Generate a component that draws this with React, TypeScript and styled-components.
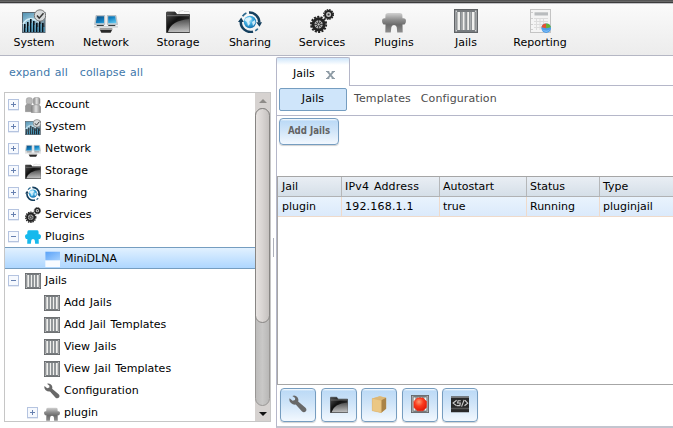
import React from 'react';
import styled, { createGlobalStyle, css } from 'styled-components';

const GlobalStyle = createGlobalStyle`
  * { box-sizing: border-box; }
  body {
    margin: 0;
    overflow: hidden;
    background: #fff;
    color: #000;
    font: 11px/14px "DejaVu Sans", Verdana, sans-serif;
    word-spacing: 1px;
  }
  svg { display: block; flex: none; }
`;

/* ---------- icons ---------- */

type IconName =
  | 'account' | 'system' | 'network' | 'storage' | 'sharing' | 'services'
  | 'plugin' | 'pluginBlue' | 'jail' | 'report' | 'wrench' | 'app' | 'box' | 'stop' | 'shell' | 'folder';

const DefsSvg = styled.svg`
  position: absolute;
`;

const Defs = () => (
  <DefsSvg width="0" height="0">
    <defs>
      <linearGradient id="gSky" x1="0" y1="0" x2="0.6" y2="1">
        <stop offset="0" stopColor="#4e8fb0" /><stop offset="0.5" stopColor="#9cc8dc" /><stop offset="1" stopColor="#4a5c68" />
      </linearGradient>
      <linearGradient id="gScreen" x1="0" y1="0" x2="1" y2="1">
        <stop offset="0" stopColor="#0a4a80" /><stop offset="0.5" stopColor="#1283c4" /><stop offset="1" stopColor="#6cd0f4" />
      </linearGradient>
      <linearGradient id="gFolder" x1="0" y1="0" x2="0" y2="1">
        <stop offset="0" stopColor="#5c5c5c" /><stop offset="1" stopColor="#f0f0f0" />
      </linearGradient>
      <linearGradient id="gDark" x1="0" y1="0" x2="1" y2="1">
        <stop offset="0" stopColor="#555" /><stop offset="0.4" stopColor="#111" /><stop offset="1" stopColor="#444" />
      </linearGradient>
      <linearGradient id="gPlug" x1="0" y1="0" x2="0" y2="1">
        <stop offset="0" stopColor="#d2d2d2" /><stop offset="0.35" stopColor="#8e8e8e" /><stop offset="0.6" stopColor="#6c6c6c" /><stop offset="1" stopColor="#8e8e8e" />
      </linearGradient>
      <linearGradient id="gPerson" x1="0" y1="0" x2="1" y2="0">
        <stop offset="0" stopColor="#808080" /><stop offset="0.5" stopColor="#e0e0e0" /><stop offset="1" stopColor="#858585" />
      </linearGradient>
      <linearGradient id="gApp" x1="0" y1="0" x2="1" y2="1">
        <stop offset="0" stopColor="#5aa2f7" /><stop offset="1" stopColor="#a4d0ff" />
      </linearGradient>
      <radialGradient id="gGlobe" cx="0.4" cy="0.35" r="0.7">
        <stop offset="0" stopColor="#c8efff" /><stop offset="0.5" stopColor="#3aa9df" /><stop offset="1" stopColor="#0e6aa8" />
      </radialGradient>
      <radialGradient id="gRed" cx="0.4" cy="0.3" r="0.7">
        <stop offset="0" stopColor="#ff9a70" /><stop offset="0.5" stopColor="#fb3a1c" /><stop offset="1" stopColor="#e01c08" />
      </radialGradient>
    </defs>
  </DefsSvg>
);

const PLUG =
  'M3.5 5.5Q4 4 6 4H18Q20 4 20.3 5.5L20.5 9.3H22Q24 9.5 24 11.8T22.5 15.5H20.5L20.7 23.5H15.2L14.8 18.5Q14.5 16 12 16T9.3 18.5L8.8 23.5H3.3L3.5 15.5H1.5Q0 14 0 11.8T2 9.3H3.3Z';

const SMALL_PLUG =
  'M3.5 4Q4 2 6 2H18Q20 2 20.3 4L20.5 8H22Q24 8.5 24 11T22.5 15H20.5L20.7 22H15.2L14.8 17.5Q14.5 15 12 15T9.3 17.5L8.8 22H3.3L3.5 15H1.5Q0 13.5 0 11T2 8H3.3Z';

const bars = [2, 5, 8, 11, 14, 17, 20];
const barTops = [15, 13, 10, 12, 14, 11, 14];

const Bars = () => (
  <>
    <rect width="24" height="24" fill="#606366" />
    <rect x="1" y="1" width="22" height="22" fill="#85888b" />
    <rect x="3.5" y="3" width="17" height="18" fill="#f0f0ee" />
    {[6, 10.6, 15.2].map((x) => (
      <g key={x}>
        <rect x={x} y="2" width="2.6" height="20" fill="#777c7f" />
        <rect x={x + 0.7} y="2" width="1.1" height="20" fill="#a7abad" />
      </g>
    ))}
    <path d="M2 2h20M2 22h20" stroke="#777b7e" strokeWidth="2" />
    <path d="M1.8 1.8v20.4M22.2 1.8v20.4" stroke="#aaadaf" strokeWidth="1" />
    <path d="M2 2.2h1M21 2.2h1M2 21.8h1M21 21.8h1" stroke="#eee" />
  </>
);

const Folder = () => (
  <>
    <path d="M0.5 23.5V3.5Q0.5 3 1 3H9l2 2.5H23.5V23.5Z" fill="url(#gDark)" stroke="#333" strokeWidth="0.8" />
    <path d="M2 23Q5 11.5 23.5 10V23Z" fill="url(#gFolder)" opacity="0.75" />
    <path d="M1 6.7H23" stroke="#888" strokeWidth="0.8" />
  </>
);

const shapes: Record<IconName, React.ReactNode> = {
  account: (
    <g stroke="#888" strokeWidth="0.7">
      <rect x="2" y="1" width="9" height="10" rx="3" fill="#bbb" />
      <path d="M0.5 22V14Q1 10 6 10.5T12 14V22Z" fill="#999" />
      <rect x="12.5" y="0.7" width="10" height="11" rx="3" fill="url(#gPerson)" />
      <path d="M9.5 23.5V15Q10 11.5 16.5 11.5T23.5 15V23.5Z" fill="url(#gPerson)" />
    </g>
  ),
  system: (
    <>
      <rect x="0.5" y="3.5" width="22.5" height="20" fill="url(#gSky)" stroke="#596670" />
      <path d="M1 15Q7 5 18 14" fill="none" stroke="#d5edf5" strokeWidth="1.5" />
      {bars.map((x, i) => (
        <g key={x}>
          <rect x={x} y={barTops[i]} width="1.6" height={23 - barTops[i]} fill="#08131b" />
          <rect x={x + 1.6} y={barTops[i] + 4} width="0.9" height={19 - barTops[i]} fill="#4eb4df" />
        </g>
      ))}
      <circle cx="18" cy="6.5" r="5.7" fill="#d7dadb" stroke="#777" />
      <path d="M15 6.5l2.2 2.7 4.3-5" fill="none" stroke="#353535" strokeWidth="1.5" />
    </>
  ),
  network: (
    <>
      <path d="M2 6.5h8.8v9H0.6zM13.3 6.5h8.7l1.5 9h-10.2z" fill="#c9d0d4" stroke="#a0a8ae" strokeWidth="0.6" />
      <path d="M2.8 7.3h7.2v7H1.8zM14.2 7.3h7l1.2 7h-8.2z" fill="url(#gScreen)" />
      <path d="M3 16h6.5l.6 1H2.4zM14.5 16h6.5l.6 1h-7.6z" fill="#353c40" />
      <path d="M0 17.9h24" stroke="#b8bdc0" strokeWidth="1" />
      <rect x="5.5" y="19" width="13" height="2.2" rx="0.8" fill="#a0a0a0" />
      <path d="M6 21h12l-1.3 2.8H7.3z" fill="#292929" />
    </>
  ),
  storage: (
    <>
      <path d="M13 6V2.5l4-1 1 1h5l1 1V12H13z" fill="#fafafa" stroke="#cfcfcf" strokeWidth="0.7" />
      <Folder />
    </>
  ),
  folder: <Folder />,
  sharing: (
    <>
      <circle cx="12" cy="13" r="6.2" fill="url(#gGlobe)" />
      <path d="M8 9l4-1 2 2-3 2 1 3-2 2-1-4-3-2zM14 13l3-2 .5 3-2.5 3z" fill="#e5f8ff" opacity="0.85" />
      <g fill="none" stroke="#143f5e" strokeWidth="2.5">
        <path d="M11 3.6A9.8 9.8 0 0 1 21.3 13.5" />
        <path d="M15 22.6A9.8 9.8 0 0 1 2.8 12.5" />
      </g>
      <path d="M18.2 13.3H24l-2.5 4.4zM0 12.9h5.8L3.2 8.5z" fill="#143f5e" />
      <path d="M4.6 7.2Q6 5 8.4 4" stroke="#2a678d" strokeWidth="1.8" fill="none" />
      <path d="M19.8 19.6Q18.8 21 17.2 21.8" stroke="#2a678d" strokeWidth="1.6" fill="none" />
    </>
  ),
  services: (
    <>
      <circle cx="8.6" cy="15.4" r="7.6" fill="none" stroke="#222" strokeWidth="1.9" strokeDasharray="2.1 1.32" />
      <circle cx="8.6" cy="15.4" r="5.6" fill="#b5b5b5" stroke="#222" strokeWidth="2.9" />
      <path d="M8.6 11v9M4 15.4h9M5.4 12.2l6.4 6.4M11.8 12.2l-6.4 6.4" stroke="#333" strokeWidth="0.9" />
      <circle cx="8.6" cy="15.4" r="1.6" fill="#bbb" stroke="#222" strokeWidth="0.8" />
      <circle cx="18.6" cy="5.5" r="4.8" fill="none" stroke="#222" strokeWidth="1.3" strokeDasharray="1.6 0.91" />
      <circle cx="18.6" cy="5.5" r="3.5" fill="#c5c5c5" stroke="#222" strokeWidth="2" />
      <circle cx="18.6" cy="5.5" r="1.1" fill="#333" />
    </>
  ),
  plugin: <path d={PLUG} fill="url(#gPlug)" />,
  pluginBlue: <path d={SMALL_PLUG} fill="#16b9ed" />,
  jail: <Bars />,
  report: (
    <>
      <rect x="2.5" y="0.5" width="20" height="23" fill="#f4f4f4" stroke="#c4c4c4" />
      <rect x="6.5" y="3.3" width="13.5" height="3.2" fill="#b9bcbe" />
      <path d="M6 9.5h14M6 12.5h14M6 15.5h14M6 18.5h14M8.5 9v12M12 9v12M15.5 9v12" stroke="#dcdcdc" />
      <path d="M4 3v1M4 9v1M4 15v1M4 20v1" stroke="#aaa" />
      <circle cx="18.2" cy="19.2" r="4.8" fill="#4c9ce8" />
      <path d="M18.2 19.2L13.4 18.2Q14.2 14.4 18.2 14.4z" fill="#e65032" />
      <path d="M18.2 19.2V14.4Q22.2 14.4 22.9 18.2z" fill="#65b32e" />
      <path d="M14.2 20.2q4 3 8 0-4 5-8 0z" fill="#94cbff" />
    </>
  ),
  wrench: (
    <path
      d="M4.5 1.2Q8.5-.3 11.2 3 13.2 6 12.2 8.6L22 17Q24.2 19.2 22.5 21.8 20 24 17.4 22L9 12.8Q5.6 13.4 2.6 10.8-.4 8 .8 4.4L4.8 7.8 8 6.8 8.2 4Z"
      fill="#686868"
    />
  ),
  app: (
    <>
      <rect x="2" y="1" width="22" height="23" fill="#f8fbff" />
      <rect x="2" y="1" width="22" height="13" fill="url(#gApp)" />
    </>
  ),
  box: (
    <>
      <path d="M3 4.5L13 1.5l8.5 2.2v14.6L15 23.5 3 21Z" fill="#e8bf79" />
      <path d="M3 4.5L13 1.5l8.5 2.2-6.5 3.4z" fill="#dcb878" />
      <path d="M15 7.1l6.5-3.4v14.6L15 23.5z" fill="#a98347" />
      <path d="M3 4.5l12 2.6V23.5L3 21z" fill="#ebc784" stroke="#d4aa67" strokeWidth="0.5" />
    </>
  ),
  stop: (
    <>
      <Bars />
      <path d="M8.5 4h7.5l4.5 4.5v8L16 21H8.5L4 16.5v-8z" fill="url(#gRed)" stroke="#ec321b" />
    </>
  ),
  shell: (
    <>
      <rect y="2" width="24" height="21" fill="#292929" />
      <path d="M0 3h24" stroke="#777" strokeWidth="2" />
      <rect y="17" width="24" height="2" fill="#555" />
      <g fill="none" stroke="#ccc" strokeWidth="1.5">
        <path d="M7.5 7L2.8 10.8l4.7 3.6M13 7.6H9.5L8.8 10.6h3.6l-.6 3.6H8M17.5 6.5l-3.4 9M18.5 7l3.8 3.8-4.3 3.6" />
      </g>
    </>
  ),
};

const Icon = ({ name, size }: { name: IconName; size: number }) => (
  <svg width={size} height={size} viewBox="0 0 24 24">{shapes[name]}</svg>
);

/* ---------- page ---------- */

const Page = styled.div`
  width: 673px;
  height: 428px;
  display: flex;
  flex-direction: column;
  overflow: hidden;
`;

const TopEdge = styled.div`
  height: 4px;
  flex: none;
  background: linear-gradient(#555 0 1px, #686868 1px 2px, #3c3c3c 2px 3px, #c2c2c6 3px);
`;

const Toolbar = styled.nav`
  height: 52px;
  flex: none;
  display: flex;
  border-bottom: 1px solid #b5b7c4;
  background: linear-gradient(#fafafa, #ececec);
`;

const ToolItem = styled.div<{ $w?: number }>`
  width: ${(p) => p.$w ?? 72}px;
  padding-top: 5px;
  display: flex;
  flex-direction: column;
  align-items: center;
  gap: 3px;
  &:first-child { margin-left: -2px; }
`;

const Main = styled.div`
  flex: 1;
  min-height: 0;
  display: flex;
`;

const Sidebar = styled.aside`
  width: 271px;
  padding: 10px 0 6px 4px;
  display: flex;
  flex-direction: column;
`;

const TreeLinks = styled.div`
  display: flex;
  gap: 12px;
  padding: 0 0 12px 5px;
  color: #4178ab;
  letter-spacing: 0.07px;
`;

const TreeBox = styled.div`
  flex: 1;
  min-height: 0;
  display: flex;
  border: 1px solid #c6c6c6;
`;

const TreeList = styled.div`
  flex: 1;
  overflow: hidden;
`;

const TreeRow = styled.div<{ $nested?: boolean; $selected?: boolean }>`
  height: 22px;
  padding-left: ${(p) => (p.$nested ? 22 : 3)}px;
  display: flex;
  align-items: center;
  white-space: nowrap;
  ${(p) =>
    p.$selected &&
    css`
      background: linear-gradient(#e4f2ff, #abd5ff);
      box-shadow: inset 0 1px #759dc0, inset 0 -1px #759dc0;
    `}
`;

const Toggle = styled.span<{ $kind?: 'open' | 'closed' }>`
  width: 11px;
  height: 11px;
  flex: none;
  margin-right: 6px;
  ${(p) =>
    p.$kind &&
    css`
      border: 1px solid #b5c4e0;
      box-shadow: 0 1px #e6ebf4;
      background:
        linear-gradient(#6680b0, #6680b0) center / 5px 1px no-repeat,
        linear-gradient(#6680b0, #6680b0) center / ${p.$kind === 'closed' ? '1px 5px' : '0 0'} no-repeat,
        #f6f9fe;
    `}
`;

const RowIcon = styled.span`
  margin: 2px 4px 0 0;
`;

const RowLabel = styled.span`
  padding-top: 2px;
`;

const ScrollBar = styled.div`
  width: 15px;
  display: flex;
  flex-direction: column;
  background: #d6d2d0;
`;

const Arrow = styled.span<{ $down?: boolean }>`
  height: 15px;
  flex: none;
  display: flex;
  align-items: center;
  justify-content: center;
  color: ${(p) => (p.$down ? '#111' : '#8e8b88')};
  &::before {
    content: '';
    border: solid transparent;
    border-width: ${(p) => (p.$down ? '4px 4px 0' : '0 4px 4px')};
    ${(p) => (p.$down ? 'border-top-color' : 'border-bottom-color')}: currentColor;
  }
`;

const Track = styled.div`
  flex: 1;
  border: 1px solid #999795;
  border-radius: 8px;
  background: linear-gradient(90deg, #bdbcbb, #c9c8c7 50%, #b9b8b7);
`;

const Thumb = styled.div`
  height: 215px;
  margin: -1px;
  border: 1px solid #878583;
  border-radius: 8px;
  background: linear-gradient(90deg, #e7e3e1, #d8d4d2 50%, #c5c1bf);
`;

const Splitter = styled.div`
  width: 5px;
  padding: 182px 0 0 2px;
  &::before {
    content: '';
    display: block;
    width: 1px;
    height: 19px;
    background: #adb0ba;
  }
`;

const Content = styled.main`
  flex: 1;
  min-width: 0;
  display: flex;
  flex-direction: column;
  padding-top: 1px;
`;

const TabBar = styled.div`
  height: 29px;
  flex: none;
  display: flex;
`;

const Tab = styled.div`
  width: 74px;
  padding: 9px 14px 0 16px;
  display: flex;
  justify-content: space-between;
  border: solid #b5b7c9;
  border-width: 1px 1px 0;
  border-radius: 2px 2px 0 0;
  background: linear-gradient(#cfe6fa, #fff 7px);
`;

const CloseIcon = styled.svg`
  margin-top: 4px;
`;

const TabFill = styled.div`
  flex: 1;
  border-bottom: 1px solid #b5b7c9;
`;

const Pane = styled.div`
  flex: 1;
  min-height: 0;
  display: flex;
  flex-direction: column;
  border-left: 1px solid #b5b7c9;
  border-bottom: 2px solid #c3c5cf;
`;

const SubTabs = styled.div`
  height: 30px;
  flex: none;
  display: flex;
  gap: 10px;
  padding: 2px 0 0 2px;
  color: #4c4c4c;
  letter-spacing: 0.1px;
  border-bottom: 1px solid #b5b7c9;
`;

const SubTab = styled.span<{ $active?: boolean }>`
  padding-top: 4px;
  ${(p) =>
    p.$active &&
    css`
      width: 68px;
      height: 23px;
      margin-right: -3px;
      padding-top: 3px;
      text-align: center;
      color: #000;
      border: 1px solid #759dc0;
      border-radius: 2px;
      background: #cfe5fa;
    `}
`;

const ActionArea = styled.div`
  height: 60px;
  flex: none;
  padding: 2px;
`;

const Button = styled.button`
  display: flex;
  align-items: center;
  justify-content: center;
  padding: 0;
  border: 1px solid #769dc0;
  border-radius: 4px;
  background: linear-gradient(#fff, #bcdaf6 2px, #cfe4f8 45%, #f2f8fe);
  box-shadow: 0 1px 1px rgba(0, 0, 0, 0.18);
`;

const AddButton = styled(Button)`
  width: 60px;
  height: 27px;
  padding-bottom: 1px;
  color: #636363;
  font: bold 9.6px/14px "DejaVu Sans Condensed", "DejaVu Sans", sans-serif;
`;

const GridBox = styled.div`
  flex: 1;
  min-height: 0;
  border: solid #a6a6a6;
  border-width: 1px 0 1px 1px;
`;

const GridRow = styled.div<{ $head?: boolean }>`
  height: 20px;
  display: grid;
  grid-template-columns: 64px 98px 87px 73px 1fr;
  border-bottom: 1px solid ${(p) => (p.$head ? '#b0b2b4' : '#eedacb')};
  background: ${(p) => (p.$head ? 'linear-gradient(#e9eef4, #d5dfe8)' : 'linear-gradient(#e9f3fd, #dbeafb)')};
  > span {
    padding: 3px 0 0 3px;
    border-right: 1px solid ${(p) => (p.$head ? '#b5b7b9' : '#eedacb')};
  }
  > span:first-child { padding-left: 4px; }
  > span:nth-child(2) { letter-spacing: 0.2px; }
  > span:last-child { border-right: 0; }
`;

const BottomBar = styled.div`
  height: 41px;
  flex: none;
  display: flex;
  gap: 4px;
  padding: 3px;
`;

const IconButton = styled(Button)`
  width: 36px;
  height: 34px;
  margin-right: 0.5px;
  padding-bottom: 2px;
`;

const tools: { icon: IconName; label: string; w?: number }[] = [
  { icon: 'system', label: 'System' },
  { icon: 'network', label: 'Network' },
  { icon: 'storage', label: 'Storage' },
  { icon: 'sharing', label: 'Sharing' },
  { icon: 'services', label: 'Services' },
  { icon: 'plugin', label: 'Plugins' },
  { icon: 'jail', label: 'Jails' },
  { icon: 'report', label: 'Reporting', w: 76 },
];

type Node = { icon: IconName; label: string; toggle?: 'open' | 'closed'; nested?: boolean; selected?: boolean };

const nodes: Node[] = [
  { icon: 'account', label: 'Account', toggle: 'closed' },
  { icon: 'system', label: 'System', toggle: 'closed' },
  { icon: 'network', label: 'Network', toggle: 'closed' },
  { icon: 'storage', label: 'Storage', toggle: 'closed' },
  { icon: 'sharing', label: 'Sharing', toggle: 'closed' },
  { icon: 'services', label: 'Services', toggle: 'closed' },
  { icon: 'pluginBlue', label: 'Plugins', toggle: 'open' },
  { icon: 'app', label: 'MiniDLNA', nested: true, selected: true },
  { icon: 'jail', label: 'Jails', toggle: 'open' },
  { icon: 'jail', label: 'Add Jails', nested: true },
  { icon: 'jail', label: 'Add Jail Templates', nested: true },
  { icon: 'jail', label: 'View Jails', nested: true },
  { icon: 'jail', label: 'View Jail Templates', nested: true },
  { icon: 'wrench', label: 'Configuration', nested: true },
  { icon: 'plugin', label: 'plugin', nested: true, toggle: 'closed' },
];

const headings = ['Jail', 'IPv4 Address', 'Autostart', 'Status', 'Type'];
const jail = ['plugin', '192.168.1.1', 'true', 'Running', 'pluginjail'];
const actions: IconName[] = ['wrench', 'folder', 'box', 'stop', 'shell'];

export default function App() {
  return (
    <Page>
      <GlobalStyle />
      <Defs />
      <TopEdge />
      <Toolbar>
        {tools.map((t) => (
          <ToolItem key={t.label} $w={t.w}>
            <Icon name={t.icon} size={24} />
            {t.label}
          </ToolItem>
        ))}
      </Toolbar>
      <Main>
        <Sidebar>
          <TreeLinks>
            <span>expand all</span>
            <span>collapse all</span>
          </TreeLinks>
          <TreeBox>
            <TreeList>
              {nodes.map((n) => (
                <TreeRow key={n.label + n.icon} $nested={n.nested} $selected={n.selected}>
                  <Toggle $kind={n.toggle} />
                  <RowIcon><Icon name={n.icon} size={16} /></RowIcon>
                  <RowLabel>{n.label}</RowLabel>
                </TreeRow>
              ))}
            </TreeList>
            <ScrollBar>
              <Arrow />
              <Track><Thumb /></Track>
              <Arrow $down />
            </ScrollBar>
          </TreeBox>
        </Sidebar>
        <Splitter />
        <Content>
          <TabBar>
            <Tab>
              Jails
              <CloseIcon width="9" height="8" viewBox="0 0 9 8">
                <path d="M1.5.5l6 7M7.5.5l-6 7" stroke="#8e9ba5" strokeWidth="1.9" />
                <path d="M0 .5h3.3M5.7.5H9M0 7.5h3.3M5.7 7.5H9" stroke="#8e9ba5" />
              </CloseIcon>
            </Tab>
            <TabFill />
          </TabBar>
          <Pane>
            <SubTabs>
              <SubTab $active>Jails</SubTab>
              <SubTab>Templates</SubTab>
              <SubTab>Configuration</SubTab>
            </SubTabs>
            <ActionArea>
              <AddButton>Add Jails</AddButton>
            </ActionArea>
            <GridBox>
              <GridRow $head>{headings.map((h) => <span key={h}>{h}</span>)}</GridRow>
              <GridRow>{jail.map((v) => <span key={v}>{v}</span>)}</GridRow>
            </GridBox>
            <BottomBar>
              {actions.map((a) => (
                <IconButton key={a}><Icon name={a} size={18} /></IconButton>
              ))}
            </BottomBar>
          </Pane>
        </Content>
      </Main>
    </Page>
  );
}
